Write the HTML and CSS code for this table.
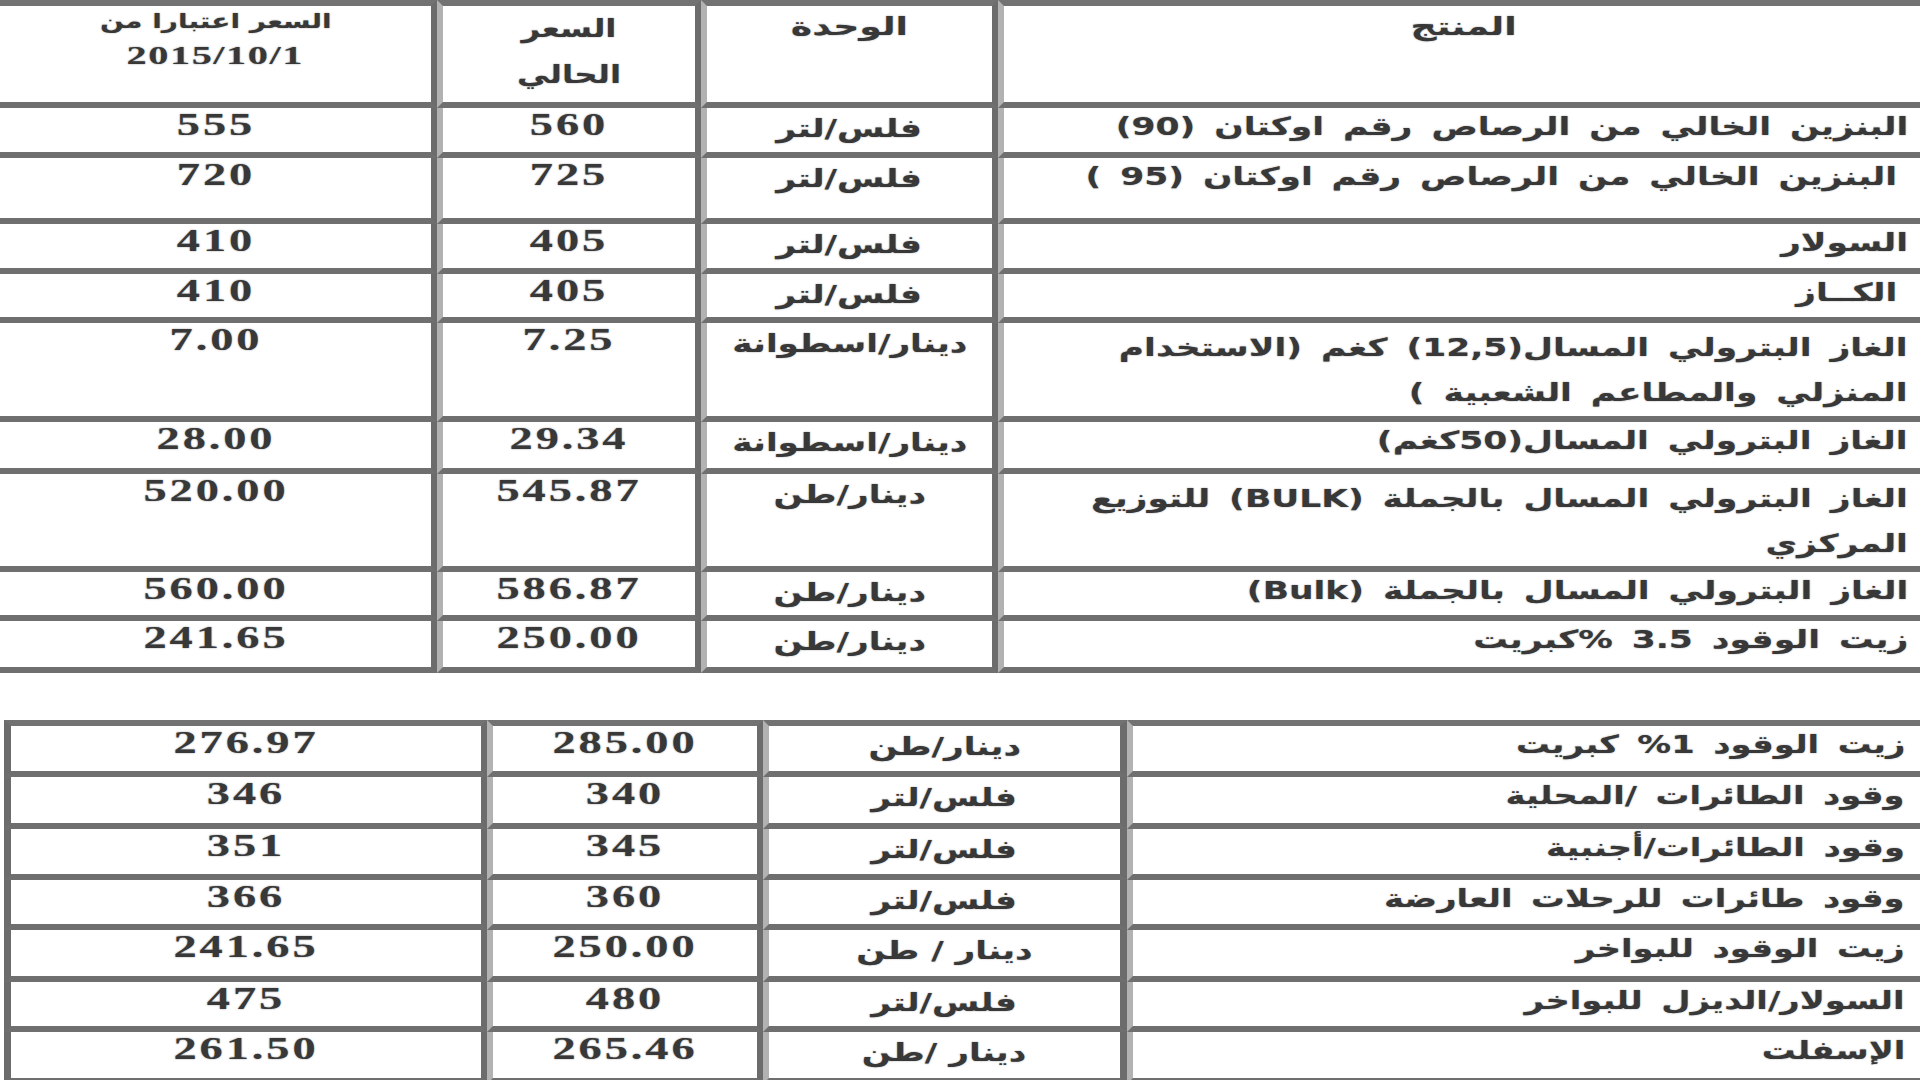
FILE: index.html
```html
<!DOCTYPE html>
<html lang="ar">
<head>
<meta charset="utf-8">
<title>أسعار المشتقات النفطية</title>
<link rel="stylesheet" href="styles.css">
</head>
<body>
<div class="page">
  <table class="grid top" dir="rtl">
    <tr class="h-hdr">
      <td class="c-prod hdr-cell first-row"><span class="ar hd">المنتج</span></td>
      <td class="c-unit first-row"><span class="ar hd">الوحدة</span></td>
      <td class="c-cur first-row"><span class="ar hd tall">السعر<br>الحالي</span></td>
      <td class="c-old first-row"><span class="ar hd sm">السعر اعتبارا من</span><br><span class="num date">2015/10/1</span></td>
    </tr>
    <tr class="h50">
      <td class="c-prod"><span class="ar pr">البنزين الخالي من الرصاص رقم اوكتان (90)</span></td>
      <td class="c-unit"><span class="ar un">فلس/لتر</span></td>
      <td class="c-cur"><span class="num">560</span></td>
      <td class="c-old"><span class="num">555</span></td>
    </tr>
    <tr class="h66">
      <td class="c-prod"><span class="ar pr lead">البنزين الخالي من الرصاص رقم اوكتان (95 )</span></td>
      <td class="c-unit"><span class="ar un">فلس/لتر</span></td>
      <td class="c-cur"><span class="num">725</span></td>
      <td class="c-old"><span class="num">720</span></td>
    </tr>
    <tr class="h50">
      <td class="c-prod"><span class="ar pr">السولار</span></td>
      <td class="c-unit"><span class="ar un">فلس/لتر</span></td>
      <td class="c-cur"><span class="num">405</span></td>
      <td class="c-old"><span class="num">410</span></td>
    </tr>
    <tr class="h49">
      <td class="c-prod"><span class="ar pr lead">الكــاز</span></td>
      <td class="c-unit"><span class="ar un">فلس/لتر</span></td>
      <td class="c-cur"><span class="num">405</span></td>
      <td class="c-old"><span class="num">410</span></td>
    </tr>
    <tr class="h99">
      <td class="c-prod"><span class="ar pr two">الغاز البترولي المسال(12,5) كغم (الاستخدام<br>المنزلي والمطاعم الشعبية )</span></td>
      <td class="c-unit"><span class="ar un">دينار/اسطوانة</span></td>
      <td class="c-cur"><span class="num">7.25</span></td>
      <td class="c-old"><span class="num">7.00</span></td>
    </tr>
    <tr class="h52">
      <td class="c-prod"><span class="ar pr">الغاز البترولي المسال(50كغم)</span></td>
      <td class="c-unit"><span class="ar un">دينار/اسطوانة</span></td>
      <td class="c-cur"><span class="num">29.34</span></td>
      <td class="c-old"><span class="num">28.00</span></td>
    </tr>
    <tr class="h98">
      <td class="c-prod"><span class="ar pr two">الغاز البترولي المسال بالجملة (BULK) للتوزيع<br>المركزي</span></td>
      <td class="c-unit"><span class="ar un">دينار/طن</span></td>
      <td class="c-cur"><span class="num">545.87</span></td>
      <td class="c-old"><span class="num">520.00</span></td>
    </tr>
    <tr class="h49">
      <td class="c-prod"><span class="ar pr">الغاز البترولي المسال بالجملة (Bulk)</span></td>
      <td class="c-unit"><span class="ar un">دينار/طن</span></td>
      <td class="c-cur"><span class="num">586.87</span></td>
      <td class="c-old"><span class="num">560.00</span></td>
    </tr>
    <tr class="h52">
      <td class="c-prod"><span class="ar pr">زيت الوقود 3.5 %كبريت</span></td>
      <td class="c-unit"><span class="ar un">دينار/طن</span></td>
      <td class="c-cur"><span class="num">250.00</span></td>
      <td class="c-old"><span class="num">241.65</span></td>
    </tr>
  </table>

  <table class="grid bottom" dir="rtl">
    <tr class="h57">
      <td class="b-prod first-row"><span class="ar pr">زيت الوقود 1% كبريت</span></td>
      <td class="b-unit first-row"><span class="ar un">دينار/طن</span></td>
      <td class="b-cur first-row"><span class="num">285.00</span></td>
      <td class="b-old first-row"><span class="num">276.97</span></td>
    </tr>
    <tr class="h52">
      <td class="b-prod"><span class="ar pr">وقود الطائرات /المحلية</span></td>
      <td class="b-unit"><span class="ar un">فلس/لتر</span></td>
      <td class="b-cur"><span class="num">340</span></td>
      <td class="b-old"><span class="num">346</span></td>
    </tr>
    <tr class="h51">
      <td class="b-prod"><span class="ar pr">وقود الطائرات/أجنبية</span></td>
      <td class="b-unit"><span class="ar un">فلس/لتر</span></td>
      <td class="b-cur"><span class="num">345</span></td>
      <td class="b-old"><span class="num">351</span></td>
    </tr>
    <tr class="h50">
      <td class="b-prod"><span class="ar pr">وقود طائرات للرحلات العارضة</span></td>
      <td class="b-unit"><span class="ar un">فلس/لتر</span></td>
      <td class="b-cur"><span class="num">360</span></td>
      <td class="b-old"><span class="num">366</span></td>
    </tr>
    <tr class="h52">
      <td class="b-prod"><span class="ar pr">زيت الوقود للبواخر</span></td>
      <td class="b-unit"><span class="ar un">دينار / طن</span></td>
      <td class="b-cur"><span class="num">250.00</span></td>
      <td class="b-old"><span class="num">241.65</span></td>
    </tr>
    <tr class="h50">
      <td class="b-prod"><span class="ar pr">السولار/الديزل للبواخر</span></td>
      <td class="b-unit"><span class="ar un">فلس/لتر</span></td>
      <td class="b-cur"><span class="num">480</span></td>
      <td class="b-old"><span class="num">475</span></td>
    </tr>
    <tr class="h52">
      <td class="b-prod"><span class="ar pr">الإسفلت</span></td>
      <td class="b-unit"><span class="ar un">دينار /طن</span></td>
      <td class="b-cur"><span class="num">265.46</span></td>
      <td class="b-old"><span class="num">261.50</span></td>
    </tr>
  </table>
</div>
</body>
</html>
```
FILE: styles.css
```css
html, body {
  margin: 0;
  padding: 0;
  background: #ffffff;
}
body {
  width: 1920px;
  height: 1080px;
  overflow: hidden;
}
.page {
  width: 1920px;
}
.grid {
  border-collapse: separate;
  border-spacing: 0;
  table-layout: fixed;
  color: #383838;
}
.grid td {
  box-sizing: border-box;
  padding: 0;
  vertical-align: top;
  text-align: center;
  border-bottom: 6px solid #6f6f6f;
  white-space: nowrap;
}
.grid td.first-row {
  border-top: 6px solid #727272;
}
.top {
  width: 1920px;
}
.bottom {
  width: 1916px;
  margin-left: 4px;
  margin-top: 47px;
}
/* top table columns (RTL: product is rightmost) */
.c-prod { width: 922px; border-left: 6px solid #b2b2b2; }
.c-unit { width: 297px; border-right: 6px solid #6c6c6c; border-left: 6px solid #b2b2b2; }
.c-cur  { width: 264px; border-right: 6px solid #6c6c6c; border-left: 6px solid #b2b2b2; }
.c-old  { width: 437px; border-right: 6px solid #6c6c6c; }
/* bottom table columns */
.b-prod { width: 793px; border-left: 6px solid #b2b2b2; }
.b-unit { width: 364px; border-right: 7px solid #6c6c6c; border-left: 6px solid #b2b2b2; }
.b-cur  { width: 276px; border-right: 6px solid #6c6c6c; border-left: 6px solid #b2b2b2; }
.b-old  { width: 483px; border-right: 6px solid #6c6c6c; border-left: 7px solid #6c6c6c; }

.grid td.c-prod { text-align: right; padding-right: 12px; }
.grid td.b-prod { text-align: right; padding-right: 15px; }
.grid td.hdr-cell { text-align: center; padding-right: 0; padding-left: 4px; }

/* row heights */
.h-hdr td { height: 108px; }
.h50 td { height: 50px; }
.h66 td { height: 66px; }
.h49 td { height: 49px; }
.h99 td { height: 99px; }
.h52 td { height: 52px; }
.h98 td { height: 98px; }
.h57 td { height: 57px; }
.h51 td { height: 51px; }

.num {
  display: inline-block;
  font-family: "Liberation Serif", "Times New Roman", serif;
  font-weight: bold;
  font-size: 32px;
  line-height: 1;
  letter-spacing: 2px;
  transform: scaleX(1.45);
  transform-origin: 50% 50%;
  text-shadow: 0 0 1.5px rgba(0,0,0,0.45);
}
.num.date {
  font-size: 26px;
  transform: scaleX(1.55);
  padding-top: 9px;
  letter-spacing: 1px;
}
.ar {
  display: inline-block;
  font-family: "DejaVu Sans", "Noto Sans", sans-serif;
  font-weight: bold;
  font-size: 25px;
  line-height: 38px;
  text-shadow: 0 0 1.5px rgba(0,0,0,0.4);
}
.pr {
  transform: scaleX(1.38);
  transform-origin: 100% 50%;
  word-spacing: 5px;
}
.b-prod .pr {
  transform: scaleX(1.35);
}
.pr.lead {
  padding-right: 8px;
}
.pr.two {
  line-height: 45px;
  padding-top: 2px;
}
.un {
  transform: scaleX(1.37);
  transform-origin: 50% 50%;
  padding-top: 2px;
}
.hd {
  line-height: 30px;
  padding-top: 6px;
  transform: scaleX(1.45);
  transform-origin: 50% 50%;
}
.hd.tall {
  line-height: 46px;
  padding-top: 0;
  transform: scaleX(1.3);
}
.hd.sm {
  font-size: 20px;
  line-height: 26px;
  padding-top: 2px;
  transform: scaleX(1.4);
}
```
